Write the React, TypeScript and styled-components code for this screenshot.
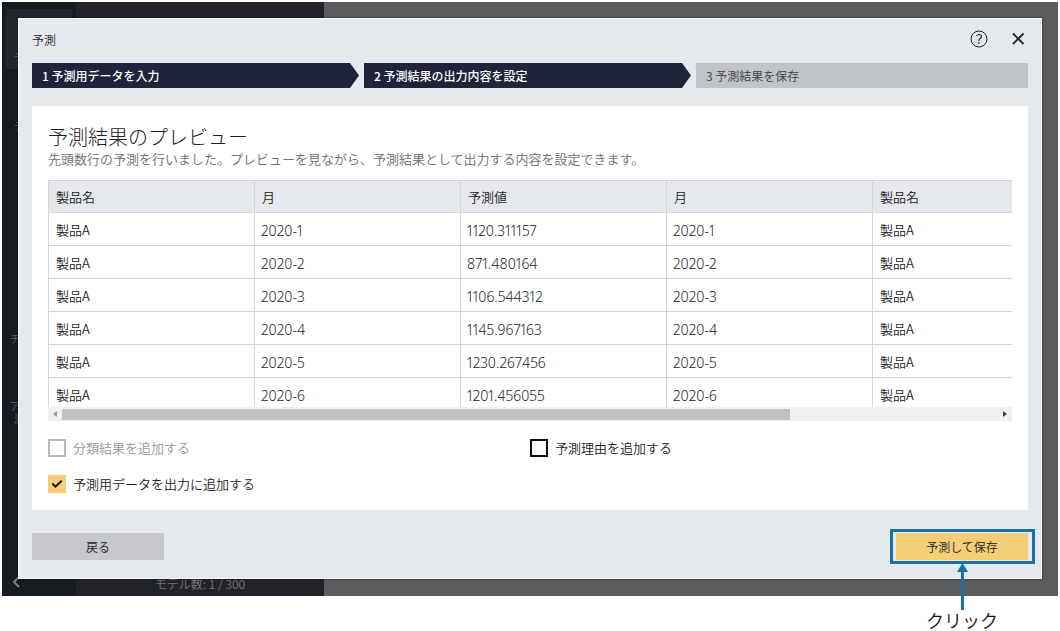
import React from "react";
import styled, { createGlobalStyle, css } from "styled-components";

const GlobalStyle = createGlobalStyle`
  *, *::before, *::after { box-sizing: border-box; }
  body {
    margin: 0;
    background: #ffffff;
    color: #222222;
    font-family: "Noto Sans CJK JP", "Noto Sans", sans-serif;
    font-weight: 350;
    font-size: 13px;
    line-height: 18px;
  }
  button, input { font: inherit; }
`;

const Stage = styled.div`
  display: grid;
  padding: 2px 2px 35px;
`;

/* The application behind the dialog */
const Backdrop = styled.div`
  grid-area: 1 / 1;
  display: grid;
  grid-template-columns: 74px 248px 1fr;
  min-width: 0;
  background: #5b5c5e;
`;

const SideNav = styled.nav`
  display: flex;
  flex-direction: column;
  padding: 7px 4px 4px;
  background: #171b22;
`;

const NavItem = styled.a<{ $active?: boolean; $before?: number; $indent?: number }>`
  display: flex;
  flex-direction: column;
  justify-content: flex-end;
  height: 60px;
  margin-top: ${(p) => p.$before ?? 0}px;
  padding: 0 0 6px ${(p) => p.$indent ?? 8}px;
  background: ${(p) => (p.$active ? "#25252d" : "transparent")};
  color: #66686d;
  font-size: 10px;
  line-height: 13px;
  text-decoration: none;
`;

const NavSecondLine = styled.span`
  padding-left: 4px;
`;

const CollapseButton = styled.button`
  display: flex;
  margin-top: auto;
  padding: 3px 5px;
  border: 0;
  background: none;
  color: #7d7f83;
`;

const ModelPanel = styled.aside`
  display: flex;
  align-items: flex-end;
  justify-content: center;
  padding-bottom: 3px;
  background: #22222a;
  color: #77777a;
  font-size: 12px;
`;

/* The dialog */
const Dialog = styled.section`
  grid-area: 1 / 1;
  display: flex;
  flex-direction: column;
  min-width: 0;
  margin: 16px 16px 17px;
  padding: 0 13px 18px;
  border: 1px solid #f6f7f9;
  background: #e5e8ed;
  box-shadow: 0 0 2px rgba(0, 0, 0, 0.6);
`;

const DialogHeader = styled.header`
  display: flex;
  align-items: center;
  gap: 20px;
  height: 44px;
  padding-bottom: 4px;
`;

const DialogTitle = styled.h1`
  flex: 1;
  margin: 0;
  padding-top: 2px;
  font-size: 12px;
  font-weight: 350;
`;

const IconButton = styled.button`
  display: flex;
  padding: 0;
  border: 0;
  background: none;
  color: #222222;
`;

const Steps = styled.ol`
  display: grid;
  grid-template-columns: repeat(3, 1fr);
  margin: 0 0 18px;
  padding: 0;
  list-style: none;
`;

const Step = styled.li<{ $done?: boolean }>`
  display: flex;
  align-items: center;
  height: 25px;
  padding-left: 10px;
  background: #c1c4c9;
  color: #3c3e42;
  font-size: 12px;
  ${(p) =>
    p.$done &&
    css`
      margin-right: 5px;
      background: #20243a;
      color: #ffffff;
      font-weight: 500;
      clip-path: polygon(0 0, calc(100% - 9px) 0, 100% 50%, calc(100% - 9px) 100%, 0 100%);
    `}
`;

const Card = styled.div`
  padding: 18px 16px 17px;
  background: #ffffff;
`;

const CardTitle = styled.h2`
  margin: 0;
  font-size: 20px;
  font-weight: 300;
  line-height: 26px;
`;

const Lead = styled.p`
  margin: 0 0 12px;
  color: #6b6d70;
`;

const TableClip = styled.div`
  max-height: 227px;
  overflow: hidden;
`;

const Table = styled.table`
  width: 1030px;
  min-width: 100%;
  table-layout: fixed;
  border-collapse: separate;
  border-spacing: 0;
  border-top: 1px solid #d3d7dc;
`;

const cell = css`
  border-bottom: 1px solid #d3d7dc;
  border-left: 1px solid #d3d7dc;
  text-align: left;
  white-space: nowrap;
`;

const HeadCell = styled.th`
  ${cell}
  height: 32px;
  padding: 0 7px;
  background: #e5e8ed;
  font-weight: 350;
`;

const Cell = styled.td<{ $numeric?: boolean }>`
  ${cell}
  height: 33px;
  padding: 2px 7px 0;
  ${(p) =>
    p.$numeric &&
    css`
      padding: 3px 6px 0;
      font-family: "Noto Sans", sans-serif;
      font-size: 14px;
      font-variant-numeric: proportional-nums;
    `}
`;

const ScrollTrack = styled.div`
  display: flex;
  align-items: center;
  height: 14px;
  padding: 0 5px;
  margin-bottom: 18px;
  background: #f0f0f0;
`;

const ScrollLane = styled.div`
  flex: 1;
  margin: 0 8px 0 5px;
`;

const ScrollThumb = styled.div`
  width: 78%;
  height: 11px;
  background: #c1c1c1;
`;

const ScrollArrow = styled.i<{ $right?: boolean }>`
  border: 3px solid transparent;
  ${(p) =>
    p.$right
      ? "border-left: 4px solid #404040; border-right: 0;"
      : "border-right: 4px solid #9a9a9a; border-left: 0;"}
`;

const Options = styled.div`
  display: grid;
  grid-template-columns: 1fr 1fr;
  row-gap: 18px;
`;

const Option = styled.label<{ $disabled?: boolean }>`
  display: flex;
  align-items: center;
  gap: 7px;
  color: ${(p) => (p.$disabled ? "#96989b" : "#222222")};
`;

const CheckBox = styled.input`
  display: grid;
  place-items: center;
  flex: none;
  width: 18px;
  height: 18px;
  margin: 0;
  appearance: none;
  border: 2px solid #111111;
  background: #ffffff;
  &:disabled { border-color: #b9babc; }
  &:checked {
    border: 0;
    background: #f4cd76;
  }
  &:checked::before {
    content: "";
    width: 11px;
    height: 8px;
    background: #111111;
    clip-path: polygon(0 52%, 12% 34%, 36% 66%, 88% 0, 100% 16%, 37% 100%);
  }
`;

const Actions = styled.footer`
  display: flex;
  justify-content: space-between;
  margin-top: 23px;
`;

const Button = styled.button<{ $primary?: boolean }>`
  display: block;
  width: 132px;
  height: 27px;
  padding: 0;
  border: 0;
  border-radius: 1px;
  background: ${(p) => (p.$primary ? "#f4cd76" : "#c6c8cd")};
  color: #222222;
  font-size: 12px;
`;

/* Callout drawn over the save button */
const Highlight = styled.div`
  position: relative;
  &::after {
    content: "";
    position: absolute;
    inset: -4px -7px -4px -6px;
    border: 3px solid #1872a5;
    pointer-events: none;
  }
`;

const Callout = styled.div`
  position: absolute;
  top: calc(100% + 3px);
  left: 0;
  right: 0;
  display: flex;
  flex-direction: column;
  align-items: center;
  color: #111111;
  font-size: 18px;
  line-height: 20px;
`;

const columns = ["製品名", "月", "予測値", "月", "製品名"];
const rows = [
  ["2020-1", "1120.311157"],
  ["2020-2", "871.480164"],
  ["2020-3", "1106.544312"],
  ["2020-4", "1145.967163"],
  ["2020-5", "1230.267456"],
  ["2020-6", "1201.456055"],
];

export default function App() {
  return (
    <>
      <GlobalStyle />
      <Stage>
        <Backdrop>
          <SideNav>
            <NavItem href="#" $active>デ</NavItem>
            <NavItem href="#" $before={9}>デ</NavItem>
            <NavItem href="#" $before={153} $indent={4}>チ</NavItem>
            <NavItem href="#" $before={20} $indent={4}>
              ア
              <NavSecondLine>測</NavSecondLine>
            </NavItem>
            <CollapseButton aria-label="折りたたむ">
              <svg width="12" height="14" viewBox="0 0 12 14" fill="none" stroke="currentColor" strokeWidth="2">
                <path d="M8 2 3 7l5 5" />
              </svg>
            </CollapseButton>
          </SideNav>
          <ModelPanel>モデル数: 1 / 300</ModelPanel>
        </Backdrop>
        <Dialog role="dialog" aria-labelledby="dialog-title">
          <DialogHeader>
            <DialogTitle id="dialog-title">予測</DialogTitle>
            <IconButton aria-label="ヘルプ">
              <svg width="18" height="18" viewBox="0 0 18 18" fill="none" stroke="currentColor">
                <circle cx="9" cy="9" r="8" />
                <path d="M6.500 5.800c.6-.9 1.500-1.300 2.500-1.300 1.500 0 2.500.8 2.500 2.100 0 1.900-2.700 2.100-2.700 4.100v.4" strokeWidth="1.200" />
                <path d="M8.800 12.300v1.400" strokeWidth="1.400" />
              </svg>
            </IconButton>
            <IconButton aria-label="閉じる">
              <svg width="20" height="18" viewBox="0 0 20 18" fill="none" stroke="currentColor" strokeWidth="1.800">
                <path d="m5 3.500 10.500 10.500M15.500 3.500 5 14" />
              </svg>
            </IconButton>
          </DialogHeader>
          <Steps>
            <Step $done>1 予測用データを入力</Step>
            <Step $done>2 予測結果の出力内容を設定</Step>
            <Step>3 予測結果を保存</Step>
          </Steps>
          <Card>
            <CardTitle>予測結果のプレビュー</CardTitle>
            <Lead>先頭数行の予測を行いました。プレビューを見ながら、予測結果として出力する内容を設定できます。</Lead>
            <TableClip>
              <Table>
                <thead>
                  <tr>
                    {columns.map((name, i) => (
                      <HeadCell key={i} scope="col">{name}</HeadCell>
                    ))}
                  </tr>
                </thead>
                <tbody>
                  {rows.map(([month, value]) => (
                    <tr key={month}>
                      <Cell>製品A</Cell>
                      <Cell $numeric>{month}</Cell>
                      <Cell $numeric>{value}</Cell>
                      <Cell $numeric>{month}</Cell>
                      <Cell>製品A</Cell>
                    </tr>
                  ))}
                </tbody>
              </Table>
            </TableClip>
            <ScrollTrack>
              <ScrollArrow />
              <ScrollLane>
                <ScrollThumb />
              </ScrollLane>
              <ScrollArrow $right />
            </ScrollTrack>
            <Options>
              <Option $disabled>
                <CheckBox type="checkbox" disabled />
                分類結果を追加する
              </Option>
              <Option>
                <CheckBox type="checkbox" />
                予測理由を追加する
              </Option>
              <Option>
                <CheckBox type="checkbox" defaultChecked />
                予測用データを出力に追加する
              </Option>
            </Options>
          </Card>
          <Actions>
            <Button>戻る</Button>
            <Highlight>
              <Button $primary>予測して保存</Button>
              <Callout>
                <svg width="11" height="47" viewBox="0 0 11 47">
                  <path d="M5.500 8v39" stroke="#1872a5" strokeWidth="3" />
                  <path d="M5.500 0 11 9H0z" fill="#1872a5" />
                </svg>
                クリック
              </Callout>
            </Highlight>
          </Actions>
        </Dialog>
      </Stage>
    </>
  );
}
